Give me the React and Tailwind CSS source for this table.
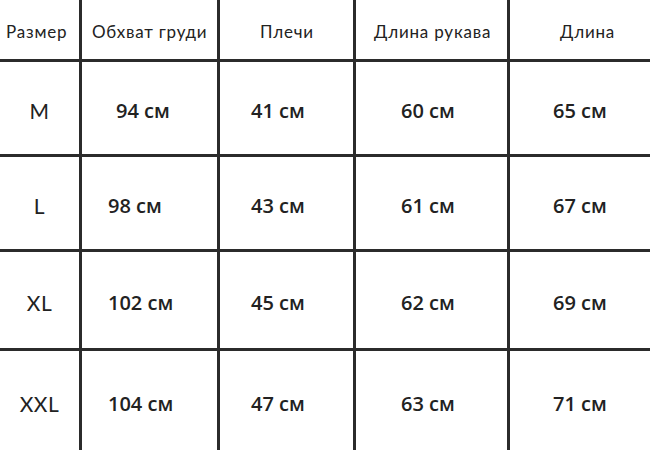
export default function App() {
  const rows = [
    { s: "M", v: ["94 см", "41 см", "60 см", "65 см"], h: "h-[95px]", first: "pl-[34px]" },
    { s: "L", v: ["98 см", "43 см", "61 см", "67 см"], h: "h-[95px]", first: "pl-[26px]" },
    { s: "XL", v: ["102 см", "45 см", "62 см", "69 см"], h: "h-[99px]", first: "pl-[26px]" },
    { s: "XXL", v: ["104 см", "47 см", "63 см", "71 см"], h: "h-[99px]", first: "pl-[26px]" },
  ];
  const line = "border-[#2b2b2b]";
  const data = "flex items-center pt-[6px] text-[20px] font-semibold font-['Open_Sans',sans-serif]";
  return (
    <div className="w-[650px] h-[450px] bg-white overflow-hidden text-[#222]">
      <div className={`flex h-[62px] border-b-[3px] ${line} text-[17px] tracking-[0.8px] font-['Lato',sans-serif]`}>
        <div className={`w-[82px] border-r-[3px] ${line} flex items-center pl-[6px] pt-[5px]`}>Размер</div>
        <div className={`w-[138px] border-r-[3px] ${line} flex items-center pl-[10px] pt-[5px]`}>Обхват груди</div>
        <div className={`w-[136px] border-r-[3px] ${line} flex items-center pl-[40px] pt-[5px]`}>Плечи</div>
        <div className={`w-[154px] border-r-[3px] ${line} flex items-center pl-[18px] pt-[5px]`}>Длина рукава</div>
        <div className="w-[140px] flex items-center pl-[50px] pt-[5px]">Длина</div>
      </div>
      {rows.map((r, i) => (
        <div key={r.s} className={`flex ${r.h} ${i < 3 ? `border-b-[3px] ${line}` : ""}`}>
          <div className={`w-[82px] border-r-[3px] ${line} flex items-center justify-center pt-[6px] text-[21px] font-normal tracking-[0.5px] font-['Lato',sans-serif]`}>
            {r.s}
          </div>
          <div className={`w-[138px] border-r-[3px] ${line} ${data} ${r.first}`}>{r.v[0]}</div>
          <div className={`w-[136px] border-r-[3px] ${line} ${data} pl-[31px]`}>{r.v[1]}</div>
          <div className={`w-[154px] border-r-[3px] ${line} ${data} pl-[45px]`}>{r.v[2]}</div>
          <div className={`w-[140px] ${data} pl-[43px]`}>{r.v[3]}</div>
        </div>
      ))}
    </div>
  );
}
